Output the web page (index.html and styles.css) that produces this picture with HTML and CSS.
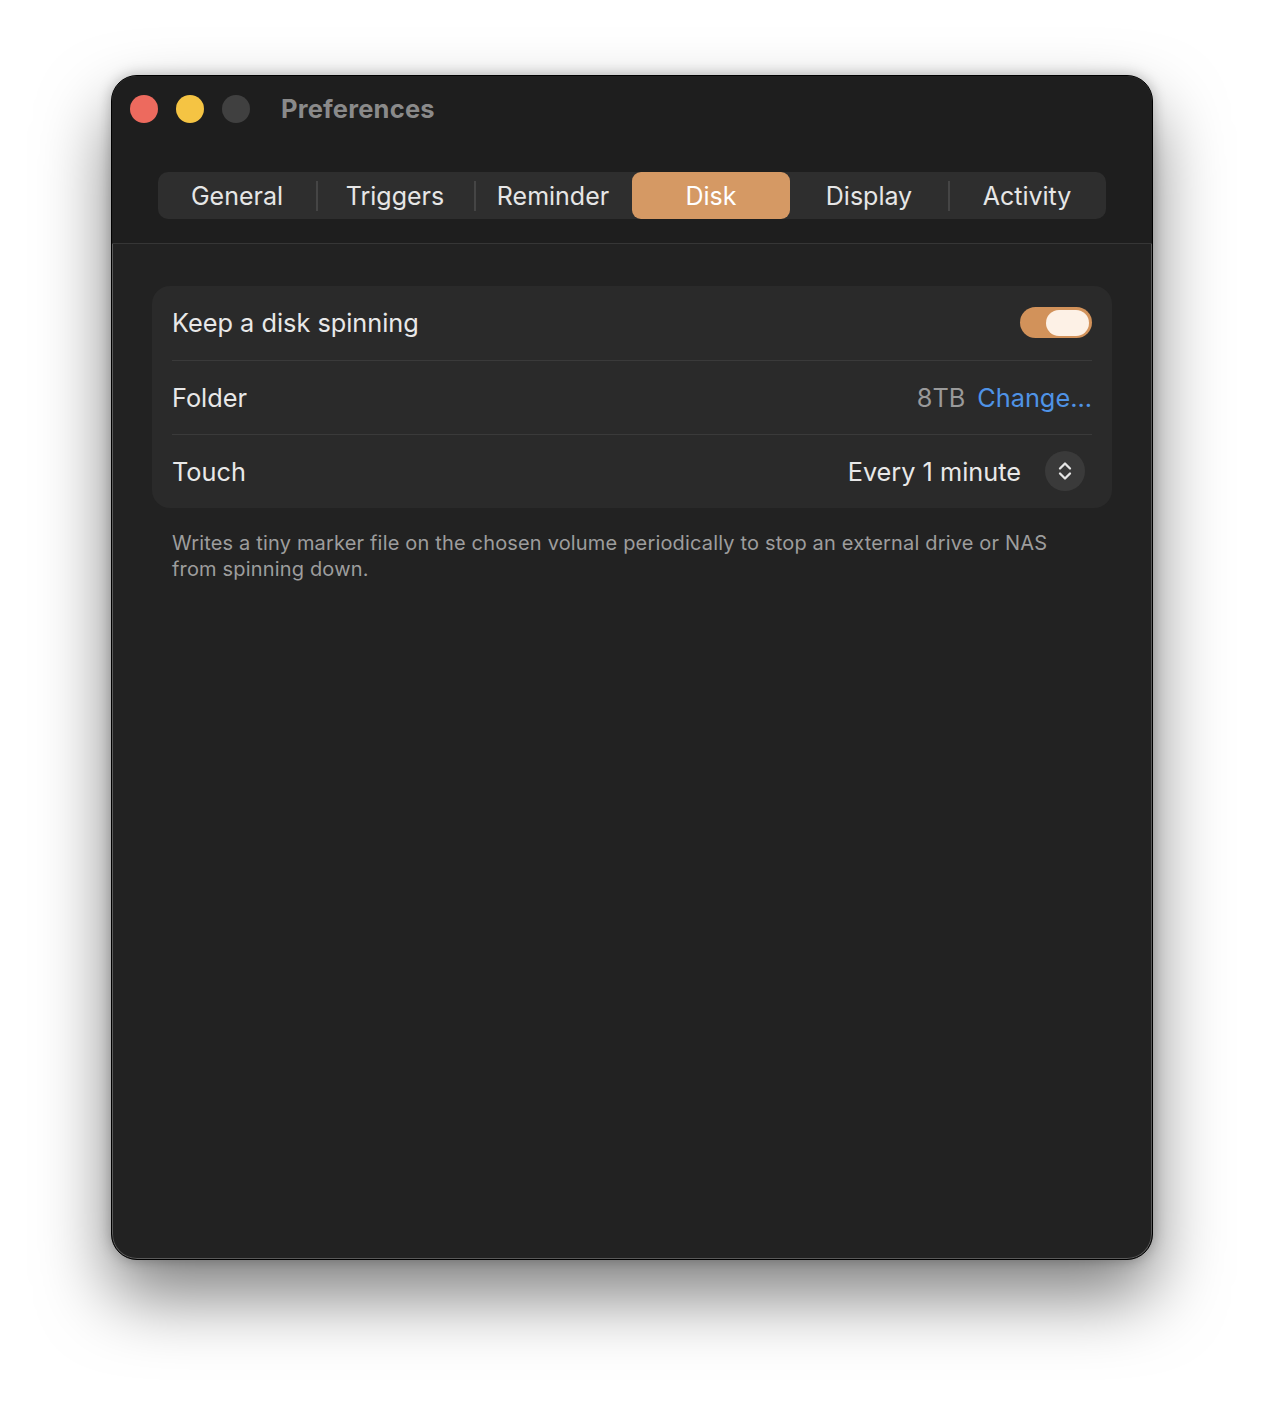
FILE: index.html
```html
<!DOCTYPE html>
<html>
  <head>
    <title>Preferences</title>
    <link rel="stylesheet" href="styles.css">
  </head>
  <body>
    <div class="window">
      <div class="titlebar">
        <div class="lights">
          <span class="light close"></span>
          <span class="light minimize"></span>
          <span class="light zoom"></span>
        </div>
        <div class="title">Preferences</div>
      </div>
      <div class="toolbar">
        <div class="tabs">
          <div class="tab">General</div>
          <div class="tab">Triggers</div>
          <div class="tab">Reminder</div>
          <div class="tab selected">Disk</div>
          <div class="tab">Display</div>
          <div class="tab">Activity</div>
        </div>
      </div>
      <div class="content">
        <div class="card">
          <div class="row">
            <span class="label">Keep a disk spinning</span>
            <div class="toggle"><div class="knob"></div></div>
          </div>
          <div class="row">
            <span class="label">Folder</span>
            <div class="value">
              <span class="muted">8TB</span>
              <span class="link">Change...</span>
            </div>
          </div>
          <div class="row">
            <span class="label">Touch</span>
            <div class="value">
              <span>Every 1 minute</span>
              <span class="stepper">
                <svg width="16" height="24" viewBox="0 0 16 24">
                  <path d="M3 9.5 L8 4.5 L13 9.5" fill="none" stroke="#e6e6e6" stroke-width="2.3" stroke-linecap="round" stroke-linejoin="round"/>
                  <path d="M3 14.5 L8 19.5 L13 14.5" fill="none" stroke="#e6e6e6" stroke-width="2.3" stroke-linecap="round" stroke-linejoin="round"/>
                </svg>
              </span>
            </div>
          </div>
        </div>
        <p class="note">Writes a tiny marker file on the chosen volume periodically to stop an external drive or NAS from spinning down.</p>
      </div>
    </div>
  </body>
</html>
```

FILE: styles.css
```css
body {
  margin: 0;
  padding: 75px 0 149px 111px;
  background: #ffffff;
  font-family: Inter, "Open Sans", sans-serif;
}
.window {
  width: 1040px;
  height: 1183px;
  background: #222222;
  border-radius: 26px;
  border: 1px solid #000;
  box-shadow: inset 0 0 0 1px #5a5a5a, 0 36px 70px rgba(0, 0, 0, 0.5), 0 0 14px rgba(0, 0, 0, 0.25);
  overflow: hidden;
  color: #e8e8e8;
}
.titlebar {
  height: 65px;
  background: #1e1e1e;
  display: flex;
  align-items: center;
  padding: 0 0 0 18px;
}
.lights {
  display: flex;
  gap: 18px;
}
.light {
  width: 28px;
  height: 28px;
  border-radius: 50%;
  display: block;
}
.close {
  background: #ed6a5e;
}
.minimize {
  background: #f5c443;
}
.zoom {
  background: #404040;
}
.title {
  margin-left: 31px;
  font-size: 25.5px;
  font-weight: 700;
  color: #8a8a8a;
  letter-spacing: 0.2px;
}
.toolbar {
  background: #1e1e1e;
  padding: 31px 46px 24px 46px;
  border-bottom: 1px solid #363636;
}
.tabs {
  display: flex;
  background: #2e2e2e;
  border-radius: 10px;
  height: 47px;
}
.tab {
  flex: 1;
  display: flex;
  align-items: center;
  justify-content: center;
  font-size: 25px;
  color: #e6e6e6;
  position: relative;
}
.tab + .tab::before {
  content: "";
  position: absolute;
  left: 0;
  top: 9px;
  height: 30px;
  width: 2px;
  background: #454545;
}
.tab.selected {
  background: #d59964;
  color: #ffffff;
  border-radius: 9px;
}
.tab.selected::before,
.tab.selected + .tab::before {
  display: none;
}
.content {
  padding: 42px 40px 0 40px;
}
.card {
  background: #2a2a2a;
  border-radius: 18px;
  padding: 0 20px;
}
.row {
  height: 74px;
  display: flex;
  align-items: center;
  justify-content: space-between;
  font-size: 25.3px;
  padding-bottom: 1px;
  box-sizing: border-box;
}
.row + .row {
  border-top: 1px solid #3a3a3a;
}
.toggle {
  width: 72px;
  height: 31px;
  border-radius: 16px;
  background: #d2925a;
  display: flex;
  align-items: center;
  justify-content: flex-end;
  padding-right: 3px;
  box-sizing: border-box;
}
.knob {
  width: 43px;
  height: 26px;
  border-radius: 13px;
  background: #fdf1e6;
}
.value {
  display: flex;
  align-items: center;
  gap: 12px;
}
.muted {
  color: #9a9a9a;
}
.link {
  color: #4f93e6;
}
.stepper {
  width: 40px;
  height: 40px;
  border-radius: 50%;
  background: #3a3a3a;
  display: flex;
  align-items: center;
  justify-content: center;
  margin-left: 12px;
  margin-right: 7px;
}
.note {
  margin: 22px 50px 0 20px;
  font-size: 20px;
  letter-spacing: 0.17px;
  line-height: 26px;
  color: #9d9d9d;
}
```
